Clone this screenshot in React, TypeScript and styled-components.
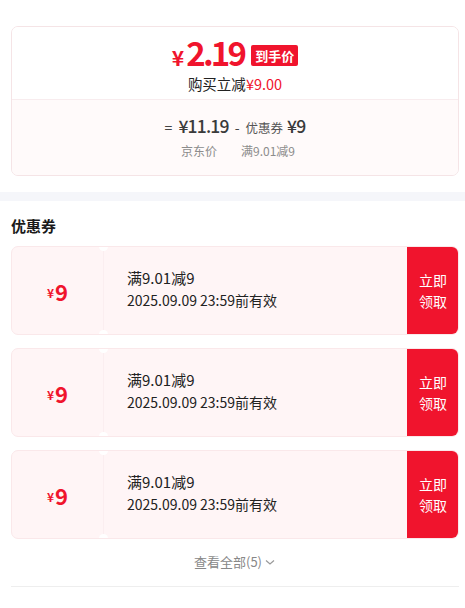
import * as React from "react"
import styled, { createGlobalStyle } from "styled-components"

const RED = "#f0142d"

const coupons = [
  { amount: "9", rule: "满9.01减9", expire: "2025.09.09 23:59前有效" },
  { amount: "9", rule: "满9.01减9", expire: "2025.09.09 23:59前有效" },
  { amount: "9", rule: "满9.01减9", expire: "2025.09.09 23:59前有效" },
]

const App: React.FunctionComponent = () => {
  return (
    <Page>
      <GlobalStyle />
      <PriceCard>
        <PriceTop>
          <PriceLine>
            <BigPrice>
              <Yen>¥</Yen>2.19
            </BigPrice>
            <Badge>到手价</Badge>
          </PriceLine>
          <Saving>
            购买立减<RedText>¥9.00</RedText>
          </Saving>
        </PriceTop>
        <PriceBottom>
          <Formula>
            <Op>=</Op>
            <FormulaValue>¥11.19</FormulaValue>
            <Op>-</Op>
            <FormulaLabel>优惠券</FormulaLabel>
            <FormulaValue>¥9</FormulaValue>
          </Formula>
          <Captions>
            <span>京东价</span>
            <span>满9.01减9</span>
          </Captions>
        </PriceBottom>
      </PriceCard>

      <Band />

      <Section>
        <SectionTitle>优惠券</SectionTitle>
        <CouponList>
          {coupons.map((c, i) => (
            <Coupon key={i}>
              <CouponAmount>
                <SmallYen>¥</SmallYen>
                {c.amount}
              </CouponAmount>
              <CouponBody>
                <Rule>{c.rule}</Rule>
                <Expire>{c.expire}</Expire>
              </CouponBody>
              <GetButton>
                立即
                <br />
                领取
              </GetButton>
            </Coupon>
          ))}
        </CouponList>
        <More>
          查看全部(5)
          <svg width="12" height="12" viewBox="0 0 12 12" fill="none">
            <path d="M2 4.5 L6 8 L10 4.5" stroke="#999" strokeWidth="1.2" />
          </svg>
        </More>
        <Divider />
      </Section>
    </Page>
  )
}

const GlobalStyle = createGlobalStyle`
  body {
    margin: 0;
    background: #fff;
    font-family: "Noto Sans CJK SC", "Noto Sans", sans-serif;
    color: #1a1a1a;
  }
`

const Page = styled.div`
  width: 465px;
  padding-top: 26px;
`

const PriceCard = styled.div`
  margin: 0 6px 0 11px;
  border: 1px solid #f5e4e6;
  border-radius: 7px;
  overflow: hidden;
`

const PriceTop = styled.div`
  display: flex;
  flex-direction: column;
  align-items: center;
  padding: 10px 0 6px;
  background: #fff;
  border-bottom: 1px solid #f8ecee;
`

const PriceLine = styled.div`
  display: flex;
  align-items: center;
  gap: 5px;
  height: 34px;
`

const BigPrice = styled.div`
  color: ${RED};
  font-size: 33px;
  font-weight: 700;
  letter-spacing: -2.8px;
  line-height: 34px;
  padding-right: 2px;
`

const Yen = styled.span`
  font-size: 21px;
  letter-spacing: 0;
  margin-right: 2px;
`

const Badge = styled.div`
  background: ${RED};
  color: #fff;
  font-size: 13px;
  font-weight: 700;
  line-height: 21px;
  padding: 0 4px;
  border-radius: 2px;
  margin-top: 2px;
`

const Saving = styled.div`
  font-size: 14.5px;
  line-height: 18px;
  margin-top: 4px;
  color: #222;
`

const RedText = styled.span`
  color: ${RED};
`

const PriceBottom = styled.div`
  background: #fffafa;
  display: flex;
  flex-direction: column;
  align-items: center;
  padding: 15px 0 15px;
`

const Formula = styled.div`
  display: flex;
  align-items: baseline;
  gap: 6px;
  color: #333;
  line-height: 22px;
`

const Op = styled.span`
  font-size: 14px;
  color: #444;
`

const FormulaValue = styled.span`
  font-size: 17.5px;
  font-weight: 500;
  letter-spacing: -0.8px;
  color: #3a3a3a;
`

const FormulaLabel = styled.span`
  font-size: 12.5px;
  color: #555;
  margin-right: -2px;
`

const Captions = styled.div`
  display: flex;
  gap: 24px;
  font-size: 12px;
  color: #8c8c8c;
  line-height: 18px;
  margin-top: 3px;
  padding-left: 6px;
`

const Band = styled.div`
  height: 9px;
  background: #f5f6fa;
  margin-top: 16px;
`

const Section = styled.div`
  padding: 14px 6px 0 11px;
`

const SectionTitle = styled.div`
  font-size: 15px;
  font-weight: 700;
  line-height: 22px;
  color: #1a1a1a;
`

const CouponList = styled.div`
  display: flex;
  flex-direction: column;
  gap: 13px;
  margin-top: 9px;
`

const Coupon = styled.div`
  display: flex;
  height: 89px;
  border-radius: 7px;
  overflow: hidden;
  background: #fff5f6;
  border: 1px solid #fae8ea;
  box-sizing: border-box;
`

const CouponAmount = styled.div`
  position: relative;
  width: 91px;
  display: flex;
  align-items: center;
  justify-content: center;
  color: ${RED};
  font-size: 22px;
  font-weight: 700;
  border-right: 1px solid #fbeef0;

  &::before,
  &::after {
    content: "";
    position: absolute;
    right: -5px;
    width: 9px;
    height: 9px;
    border-radius: 50%;
    background: #fff;
  }
  &::before {
    top: -5px;
  }
  &::after {
    bottom: -5px;
  }
`

const SmallYen = styled.span`
  font-size: 12px;
  margin-right: 1px;
  margin-top: 3px;
`

const CouponBody = styled.div`
  flex: 1;
  display: flex;
  flex-direction: column;
  justify-content: center;
  padding-left: 23px;
  padding-bottom: 4px;
  color: #222;
`

const Rule = styled.div`
  font-size: 15px;
  line-height: 23px;
`

const Expire = styled.div`
  font-size: 14px;
  line-height: 22px;
`

const GetButton = styled.div`
  width: 52px;
  margin: -1px -1px -1px 0;
  background: ${RED};
  color: #fff;
  font-size: 14px;
  line-height: 21px;
  display: flex;
  align-items: center;
  justify-content: center;
  text-align: center;
`

const More = styled.div`
  display: flex;
  align-items: center;
  justify-content: center;
  gap: 2px;
  font-size: 13px;
  color: #888;
  line-height: 20px;
  margin-top: 13px;
`

const Divider = styled.div`
  height: 1px;
  background: #eeeeee;
  margin-top: 14px;
`

export default App
